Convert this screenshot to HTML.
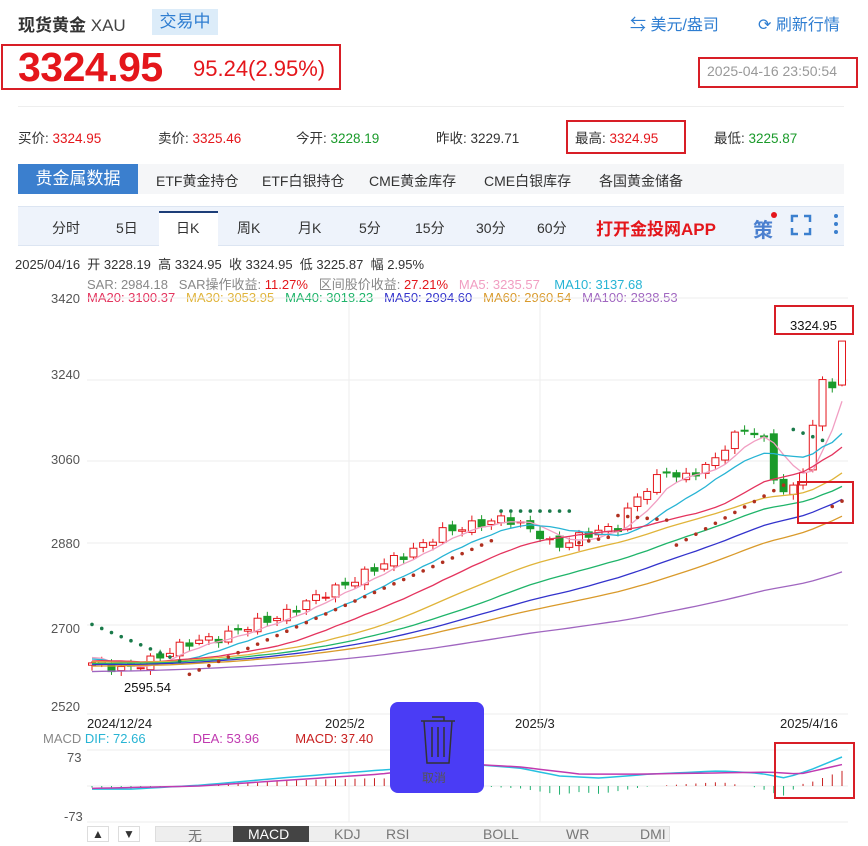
<!DOCTYPE html>
<html><head><meta charset="utf-8">
<style>
*{margin:0;padding:0;box-sizing:border-box}
body{width:868px;height:842px;background:#fff;font-family:"Liberation Sans","Noto Sans CJK SC",sans-serif;position:relative;overflow:hidden;color:#333}
.a{position:absolute;white-space:nowrap}
.red{color:#e4161b}.grn{color:#1a9a2a}
.box{position:absolute;border:2px solid #d81e26}
</style></head><body>
<div class="a" style="left:18px;top:11px;font-size:17px;font-weight:bold;color:#333">现货黄金 <span style="font-weight:normal;color:#444">XAU</span></div>
<div class="a" style="left:152px;top:9px;height:26px;width:66px;background:#dcecf9;color:#2e7dd1;font-size:17px;line-height:26px;text-align:center">交易中</div>
<div class="a" style="left:630px;top:11px;font-size:16px;color:#2e7dd1">⇆ 美元/盎司</div>
<div class="a" style="left:758px;top:11px;font-size:16px;color:#2e7dd1">⟳ 刷新行情</div>
<div class="box" style="left:1px;top:44px;width:340px;height:46px"></div>
<div class="a red" style="left:18px;top:44px;font-size:41px;font-weight:bold;letter-spacing:-0.5px">3324.95</div>
<div class="a red" style="left:193px;top:56px;font-size:22px">95.24(2.95%)</div>
<div class="box" style="left:698px;top:57px;width:160px;height:31px"></div>
<div class="a" style="left:707px;top:63px;font-size:14px;color:#999">2025-04-16 23:50:54</div>
<div class="a" style="left:18px;top:106px;width:826px;height:1px;background:#eee"></div>
<div class="a" style="left:18px;top:127px;font-size:13.5px">买价: <span class="red">3324.95</span></div>
<div class="a" style="left:158px;top:127px;font-size:13.5px">卖价: <span class="red">3325.46</span></div>
<div class="a" style="left:296px;top:127px;font-size:13.5px">今开: <span class="grn">3228.19</span></div>
<div class="a" style="left:436px;top:127px;font-size:13.5px">昨收: 3229.71</div>
<div class="box" style="left:566px;top:120px;width:120px;height:34px"></div>
<div class="a" style="left:575px;top:127px;font-size:13.5px">最高: <span class="red">3324.95</span></div>
<div class="a" style="left:714px;top:127px;font-size:13.5px">最低: <span class="grn">3225.87</span></div>
<div class="a" style="left:18px;top:164px;width:826px;height:30px;background:#f5f6f8"></div>
<div class="a" style="left:18px;top:164px;width:120px;height:30px;background:#3b7fce;color:#fff;font-size:17px;line-height:30px;text-align:center">贵金属数据</div>
<div class="a" style="left:156px;top:171px;font-size:14px">ETF黄金持仓</div>
<div class="a" style="left:262px;top:171px;font-size:14px">ETF白银持仓</div>
<div class="a" style="left:369px;top:171px;font-size:14px">CME黄金库存</div>
<div class="a" style="left:484px;top:171px;font-size:14px">CME白银库存</div>
<div class="a" style="left:599px;top:171px;font-size:14px">各国黄金储备</div>
<div class="a" style="left:18px;top:206px;width:826px;height:40px;background:#eef3fb;border-top:1px solid #dce5f2;border-bottom:1px solid #dce5f2"></div>
<div class="a" style="left:159px;top:211px;width:59px;height:35px;background:#fff;border-top:2px solid #1d3e78"></div>
<div class="a" style="left:0;top:218px;font-size:14px;width:868px">
<span class="a" style="left:52px">分时</span><span class="a" style="left:116px">5日</span><span class="a" style="left:176px">日K</span><span class="a" style="left:237px">周K</span><span class="a" style="left:298px">月K</span><span class="a" style="left:359px">5分</span><span class="a" style="left:415px">15分</span><span class="a" style="left:476px">30分</span><span class="a" style="left:537px">60分</span>
<span class="a red" style="left:596px;top:-3px;font-size:17px;font-weight:bold">打开金投网APP</span>
<span class="a" style="left:753px;top:-4px;font-size:20px;color:#4a7fcf;font-weight:bold">策</span>
</div>
<div class="a" style="left:771px;top:212px;width:6px;height:6px;border-radius:3px;background:#e4161b"></div>
<svg class="a" style="left:790px;top:214px" width="22" height="22" viewBox="0 0 22 22" fill="none" stroke="#3b7fce" stroke-width="2.5"><path d="M2 8V2h6M14 2h6v6M20 14v6h-6M8 20H2v-6"/></svg>
<div class="a" style="left:834px;top:214px;width:4px;height:4px;background:#3b7fce;box-shadow:0 8px 0 #3b7fce,0 16px 0 #3b7fce;border-radius:2px"></div>
<div class="a" style="left:15px;top:254px;font-size:13px;color:#333">2025/04/16&nbsp; 开 3228.19&nbsp; 高 3324.95&nbsp; 收 3324.95&nbsp; 低 3225.87&nbsp; 幅 2.95%</div>
<div class="a" style="left:87px;top:274px;font-size:13px;color:#888">SAR: 2984.18&nbsp;&nbsp; SAR操作收益: <span class="red">11.27%</span>&nbsp;&nbsp; 区间股价收益: <span class="red">27.21%</span>&nbsp;&nbsp; <span style="color:#f19ec2">MA5: 3235.57</span>&nbsp;&nbsp;&nbsp; <span style="color:#27b4d4">MA10: 3137.68</span></div>
<div class="a" style="left:87px;top:290px;font-size:13px"><span style="color:#e4345e">MA20: 3100.37</span>&nbsp;&nbsp; <span style="color:#e0b43a">MA30: 3053.95</span>&nbsp;&nbsp; <span style="color:#1fb46a">MA40: 3018.23</span>&nbsp;&nbsp; <span style="color:#3333cc">MA50: 2994.60</span>&nbsp;&nbsp; <span style="color:#d99a2b">MA60: 2960.54</span>&nbsp;&nbsp; <span style="color:#a066c0">MA100: 2838.53</span></div>
<div class="a" style="left:51px;top:291px;font-size:13px;color:#555">3420</div>
<div class="a" style="left:51px;top:367px;font-size:13px;color:#555">3240</div>
<div class="a" style="left:51px;top:452px;font-size:13px;color:#555">3060</div>
<div class="a" style="left:51px;top:536px;font-size:13px;color:#555">2880</div>
<div class="a" style="left:51px;top:621px;font-size:13px;color:#555">2700</div>
<div class="a" style="left:51px;top:699px;font-size:13px;color:#555">2520</div>
<div class="a" style="left:87px;top:716px;font-size:13px;color:#222">2024/12/24</div>
<div class="a" style="left:325px;top:716px;font-size:13px;color:#222">2025/2</div>
<div class="a" style="left:515px;top:716px;font-size:13px;color:#222">2025/3</div>
<div class="a" style="left:780px;top:716px;font-size:13px;color:#222">2025/4/16</div>
<div class="a" style="left:43px;top:731px;font-size:13px;color:#888">MACD <span style="color:#27b4d4">DIF: 72.66</span>&nbsp;&nbsp;&nbsp;&nbsp;&nbsp;&nbsp;&nbsp;&nbsp;&nbsp;&nbsp;&nbsp;&nbsp; <span style="color:#c03ab0">DEA: 53.96</span>&nbsp;&nbsp;&nbsp;&nbsp;&nbsp;&nbsp;&nbsp;&nbsp;&nbsp; <span style="color:#c82020">MACD: 37.40</span></div>
<div class="a" style="left:67px;top:750px;font-size:13px;color:#555">73</div>
<div class="a" style="left:64px;top:809px;font-size:13px;color:#555">-73</div>
<svg class="a" style="left:0;top:0" width="868" height="842" id="ch">
<g stroke="#eee" stroke-width="1">
<line x1="87" y1="298" x2="848" y2="298"/><line x1="87" y1="380" x2="848" y2="380"/><line x1="87" y1="461" x2="848" y2="461"/><line x1="87" y1="543" x2="848" y2="543"/><line x1="87" y1="625" x2="848" y2="625"/><line x1="87" y1="714" x2="848" y2="714"/>
<line x1="87" y1="750" x2="848" y2="750"/><line x1="87" y1="786" x2="848" y2="786"/><line x1="87" y1="822" x2="848" y2="822"/>
<line x1="349" y1="298" x2="349" y2="822"/><line x1="540" y1="298" x2="540" y2="822"/>
</g>
<g id="g"></g>
</svg>
<div class="box" style="left:774px;top:305px;width:80px;height:30px"></div>
<div class="a" style="left:790px;top:318px;font-size:13px;color:#111">3324.95</div>
<div class="box" style="left:797px;top:481px;width:57px;height:43px"></div>
<div class="box" style="left:774px;top:742px;width:81px;height:57px"></div>
<div class="a" style="left:124px;top:680px;font-size:13px;color:#111">2595.54</div>
<div class="a" style="left:390px;top:702px;width:94px;height:91px;background:#4a3cf5;border-radius:8px"></div>
<svg class="a" style="left:418px;top:712px" width="40" height="54" viewBox="0 0 40 54" fill="none" stroke="#333" stroke-width="1.5"><path d="M14 5h12v4M3 9h34M6 9l3 42h22l3-42M14 15v30M20 15v30M26 15v30"/></svg>
<div class="a" style="left:422px;top:769px;font-size:12px;color:#555">取消</div>
<div class="a" style="left:87px;top:826px;width:22px;height:16px;border:1px solid #ddd;font-size:12px;text-align:center">▲</div>
<div class="a" style="left:118px;top:826px;width:22px;height:16px;border:1px solid #ddd;font-size:12px;text-align:center">▼</div>
<div class="a" style="left:155px;top:826px;width:515px;height:16px;background:#eee;border:1px solid #ddd"></div>
<div class="a" style="left:233px;top:826px;width:76px;height:16px;background:#444"></div>
<div class="a" style="left:0;top:826px;font-size:14px;color:#777;width:868px">
<span class="a" style="left:188px">无</span><span class="a" style="left:248px;color:#fff">MACD</span><span class="a" style="left:334px">KDJ</span><span class="a" style="left:386px">RSI</span><span class="a" style="left:483px">BOLL</span><span class="a" style="left:566px">WR</span><span class="a" style="left:640px">DMI</span></div>
<script>
var NS="http://www.w3.org/2000/svg",g=document.getElementById('g');
function el(t,a){var e=document.createElementNS(NS,t);for(var k in a)e.setAttribute(k,a[k]);g.appendChild(e);return e}
function Y(p){return 298+(3420-p)*408/900}
var anc=[[0,2615],[4,2600],[8,2625],[12,2660],[16,2670],[20,2700],[24,2720],[28,2760],[32,2790],[36,2830],[40,2860],[44,2905],[48,2920],[52,2935],[56,2900],[58,2870],[62,2900],[66,2915],[68,2975],[72,3040],[74,3020],[78,3060],[80,3110],[82,3130],[84,3120],[86,2990],[88,3000],[90,3080],[91,3240],[93,3230],[94,3320]];
var N=78,cl=[];
function interp(a,t){for(var i=1;i<a.length;i++){if(t<=a[i][0]){var p=a[i-1],b=a[i];return p[1]+(b[1]-p[1])*(t-p[0])/(b[0]-p[0])}}return a[a.length-1][1]}
for(var i=0;i<N;i++){var t=i*94/(N-1);cl.push(interp(anc,t)+Math.sin(i*2.3)*10)}
cl[N-1]=3325;var dx=(842-92)/(N-1);
function X(i){return 92+i*dx}
for(var i=0;i<N;i++){var o=i?cl[i-1]+Math.cos(i*1.7)*6:2610,c=cl[i],up=c>=o;var hi=Math.max(o,c)+4+Math.abs(Math.sin(i))*8,lo=Math.min(o,c)-4-Math.abs(Math.cos(i))*8;if(i==N-1){o=3228;hi=3325;lo=3225}
var col=up?"#e4161b":"#1a9a2a";el('line',{x1:X(i),x2:X(i),y1:Y(hi),y2:Y(lo),stroke:col});
var y1=Y(Math.max(o,c)),h=Math.max(1,Y(Math.min(o,c))-y1);el('rect',{x:X(i)-3.5,y:y1,width:7,height:h,fill:up?"#fff":col,stroke:col})}
var mas=[[5,"#f19ec2"],[10,"#27b4d4"],[20,"#e4345e"],[30,"#e0b43a"],[40,"#1fb46a"],[50,"#3333cc"],[60,"#d99a2b"],[100,"#a066c0"]];
var pre=[];for(var i=0;i<100;i++)pre.push(2625-i*0.6+Math.sin(i)*12);pre.reverse();
var all=pre.concat(cl);
mas.forEach(function(m){var pts=[];for(var i=0;i<N;i++){var s=0,k=i+100;for(var j=0;j<m[0];j++)s+=all[k-j];pts.push(X(i)+','+Y(s/m[0]))}el('polyline',{points:pts.join(' '),fill:'none',stroke:m[1],'stroke-width':1.3})});
var sar=[];for(var i=0;i<N;i++){var v;if(i<10)v=2700-i*9;else if(i<42)v=2590+(i-10)*9.5;else if(i<50)v=2950;else if(i<54)v=2880+(i-50)*4;else if(i<60)v=2940-(i-54)*2;else if(i<72)v=2875+(i-60)*12;else if(i<76)v=3130-(i-72)*8;else v=2960+(i-76)*12;
el('circle',{cx:X(i),cy:Y(v),r:1.8,fill:(i<10||(i>=42&&i<50)||(i>=72&&i<76))?"#1a7a4a":"#b03020"})}
var z=786,k=29/73;
var difA=[[92,-8],[130,-8],[200,2],[290,22],[380,40],[470,55],[520,45],[560,25],[600,20],[650,30],[720,38],[760,32],[785,20],[810,40],[842,73]];
var deaA=[[92,-6],[200,0],[290,15],[380,30],[470,55],[520,48],[580,30],[640,30],[720,33],[770,35],[800,30],[842,54]];
var dif=[],dea=[];for(var i=0;i<N;i++){dif.push(interp(difA,X(i)));dea.push(interp(deaA,X(i)))}
for(var i=0;i<N;i++){var h=(dif[i]-dea[i])*2,col=h>=0?"#c82020":"#20b070";if(Math.abs(h)>1)el('line',{x1:X(i),x2:X(i),y1:z,y2:z-h*k,stroke:col})}
function pl(a,c){el('polyline',{points:a.map(function(v,i){return X(i)+','+(z-v*k)}).join(' '),fill:'none',stroke:c,'stroke-width':1.5})}
pl(dif,"#27c0e0");pl(dea,"#c03ab0");
</script>
</body></html>
